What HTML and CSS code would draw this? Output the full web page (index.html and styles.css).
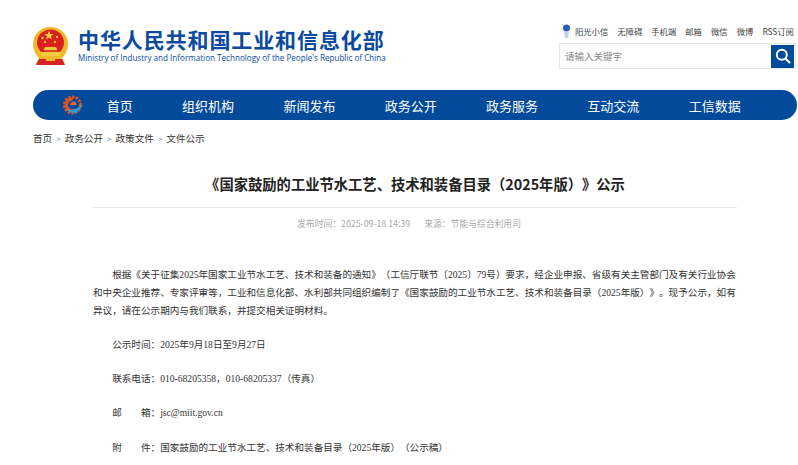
FILE: index.html
```html
<!DOCTYPE html>
<html lang="zh-CN">
<head>
    <meta charset="UTF-8">
    <meta name="viewport" content="width=device-width, initial-scale=1.0">
    <title>《国家鼓励的工业节水工艺、技术和装备目录（2025年版）》公示</title>
    <link rel="stylesheet" href="styles.css">
</head>
<body>
    <header class="header">
        <a href="#" class="brand">
            <svg class="emblem" width="35" height="38" viewBox="0 0 35 38">
                <path d="M17.500 0C8 0 0 7 0 17c0 6 3 11 6 14l-3 6h29l-3-6c3-3 6-8 6-14C35 7 27 0 17.500 0z" fill="#eeb92a"/>
                <ellipse cx="17.500" cy="15.500" rx="13.500" ry="13" fill="#dc1f1d"/>
                <polygon points="16,3.500 17.200,7 20.800,7 17.900,9.200 19,12.600 16,10.500 13,12.600 14.100,9.200 11.200,7 14.800,7" fill="#f7d330"/>
                <circle cx="9.500" cy="11" r="1.200" fill="#f7d330"/>
                <circle cx="24" cy="10" r="1.200" fill="#f7d330"/>
                <circle cx="12" cy="15" r="1.200" fill="#f7d330"/>
                <circle cx="22" cy="15" r="1.200" fill="#f7d330"/>
                <path d="M12 20h11l1.500 3h-14zM8 25h19v4H8z" fill="#f3c93f"/>
                <path d="M11 23h13v2H11z" fill="#d84a26"/>
                <path d="M6 32h23l3 6H3z" fill="#d6231f"/>
                <path d="M13 29h9v5h-9z" fill="#eeb92a"/>
            </svg>
            <span class="brand-text">
                <span class="brand-cn">中华人民共和国工业和信息化部</span>
                <span class="brand-en">Ministry of Industry and Information Technology of the People's Republic of China</span>
            </span>
        </a>
        <div class="tools">
            <ul class="tool-links">
                <li class="sun-item">
                    <svg width="11" height="17" viewBox="0 0 11 17">
                        <path d="M1 2l1.500 1.500M10 2L8.500 3.500M0 7h1.500M11 7H9.500" stroke="#f0c83c" stroke-width="1"/>
                        <circle cx="5.500" cy="6" r="3.500" fill="#2a5cc0"/>
                        <path d="M3 10h5l-1 6H4z" fill="#bcd4f2"/>
                    </svg>
                    <a href="#">阳光小信</a>
                </li>
                <li><a href="#">无障碍</a></li>
                <li><a href="#">手机端</a></li>
                <li><a href="#">邮箱</a></li>
                <li><a href="#">微信</a></li>
                <li><a href="#">微博</a></li>
                <li><a href="#">RSS订阅</a></li>
            </ul>
            <form class="search">
                <input class="search-input" type="text" placeholder="请输入关键字">
                <button class="search-btn" type="button">
                    <svg width="16" height="16" viewBox="0 0 16 16">
                        <circle cx="6.800" cy="6.800" r="5" fill="none" stroke="#fff" stroke-width="2"/>
                        <path d="M10.500 10.500L15 15" stroke="#fff" stroke-width="2.200"/>
                    </svg>
                </button>
            </form>
        </div>
    </header>

    <nav class="nav">
        <svg class="nav-logo" width="20" height="20" viewBox="0 0 20 20">
            <circle cx="9.500" cy="10" r="8" fill="none" stroke="#e2521f" stroke-width="3" stroke-dasharray="2.500 1.200"/>
            <path d="M9.500 4a6 6 0 1 0 4 10.500" fill="none" stroke="#e2521f" stroke-width="3"/>
            <path d="M7 10h6.500c0-2.500-1.500-3.500-3-3.500S8 7.500 7 10z" fill="#f26a2a"/>
            <path d="M4 14c6 2 12 0 15-6-.5 5-3 9-7 10-4 .5-6.500-1-8-4z" fill="#2f9bd6"/>
        </svg>
        <a href="#" class="nav-item">首页</a>
        <a href="#" class="nav-item">组织机构</a>
        <a href="#" class="nav-item">新闻发布</a>
        <a href="#" class="nav-item">政务公开</a>
        <a href="#" class="nav-item">政务服务</a>
        <a href="#" class="nav-item">互动交流</a>
        <a href="#" class="nav-item">工信数据</a>
    </nav>

    <div class="crumbs">
        <a href="#">首页</a><span class="sep">&gt;</span>
        <a href="#">政务公开</a><span class="sep">&gt;</span>
        <a href="#">政策文件</a><span class="sep">&gt;</span>
        <a href="#">文件公示</a>
    </div>

    <main class="article">
        <h1 class="article-title">《国家鼓励的工业节水工艺、技术和装备目录（2025年版）》公示</h1>
        <div class="meta">
            <span>发布时间：2025-09-18 14:39</span>
            <span>来源：节能与综合利用司</span>
        </div>
        <div class="article-body">
            <p>根据《关于征集2025年国家工业节水工艺、技术和装备的通知》（工信厅联节〔2025〕79号）要求，经企业申报、省级有关主管部门及有关行业协会和中央企业推荐、专家评审等，工业和信息化部、水利部共同组织编制了《国家鼓励的工业节水工艺、技术和装备目录（2025年版）》。现予公示，如有异议，请在公示期内与我们联系，并提交相关证明材料。</p>
            <p>公示时间：2025年9月18日至9月27日</p>
            <p>联系电话：010-68205358，010-68205337（传真）</p>
            <p>邮　　箱：jsc@miit.gov.cn</p>
            <p class="last">附　　件：国家鼓励的工业节水工艺、技术和装备目录（2025年版）（公示稿）</p>
        </div>
    </main>
</body>
</html>
```

FILE: styles.css
```css
* {
    box-sizing: border-box;
}
body {
    margin: 0;
    background: #fff;
    color: #333;
    font-family: "Noto Sans CJK SC", "Noto Sans", sans-serif;
    text-spacing-trim: space-all;
    overflow: hidden;
}
a {
    color: inherit;
    text-decoration: none;
}
.header {
    display: flex;
    justify-content: space-between;
    padding: 22px 2px 0 33px;
    height: 90px;
}
.brand {
    display: flex;
    align-items: flex-start;
    gap: 10px;
    padding-top: 5px;
}
.brand-text {
    display: flex;
    flex-direction: column;
    color: #0b4a9e;
    margin-top: -1px;
}
.brand-cn {
    font-size: 21px;
    font-weight: 700;
    line-height: 26px;
    letter-spacing: 0.900px;
    white-space: nowrap;
}
.brand-en {
    font-family: "Open Sans", sans-serif;
    font-size: 8.100px;
    line-height: 12px;
    white-space: nowrap;
}
.tools {
    width: 237px;
}
.tool-links {
    display: flex;
    justify-content: space-between;
    align-items: center;
    list-style: none;
    margin: 0 2px 4px 0;
    padding: 0 0 0 2px;
    height: 17px;
    font-size: 8.300px;
    color: #444;
    white-space: nowrap;
}
.sun-item {
    display: flex;
    align-items: center;
    gap: 3px;
}
.search {
    display: flex;
    align-items: center;
    height: 26px;
    padding-right: 1px;
    border: 1px solid #e8e8e8;
}
.search-input {
    flex: 1;
    min-width: 0;
    border: 0;
    padding: 0 5px;
    font: 9.500px "Noto Sans CJK SC", sans-serif;
    outline: none;
}
.search-input::placeholder {
    color: #888;
}
.search-btn {
    display: flex;
    align-items: center;
    justify-content: center;
    width: 23px;
    height: 23px;
    padding: 0;
    border: 0;
    background: #034a9a;
}
.nav {
    display: flex;
    align-items: center;
    gap: 49.300px;
    height: 30px;
    margin: 0 1px 0 33px;
    padding-left: 30px;
    background: #034a9a;
    border-radius: 15px;
}
.nav-logo {
    margin-right: -25.500px;
}
.nav-item {
    color: #fff;
    font-size: 13px;
    white-space: nowrap;
}
.crumbs {
    display: flex;
    align-items: center;
    gap: 4px;
    margin: 10px 0 0 33px;
    height: 16px;
    font-size: 9.600px;
    color: #333;
}
.sep {
    color: #5a8ac8;
    font-size: 8px;
}
.article {
    width: 644px;
    margin: 0 0 0 93px;
}
.article-title {
    margin: 0;
    padding: 28px 0 13px;
    border-bottom: 1px solid #e8e8e8;
    text-align: center;
    font-size: 14.300px;
    line-height: 20px;
    font-weight: 700;
    color: #222;
    white-space: nowrap;
}
.meta {
    display: flex;
    justify-content: center;
    gap: 14px;
    margin-top: 9px;
    padding-right: 12px;
    font-size: 8.800px;
    line-height: 14px;
    color: #aaa;
}
.article-body {
    margin-top: 35px;
    font-family: "Liberation Serif", "Noto Sans CJK SC", serif;
    font-size: 9.600px;
    line-height: 18px;
    color: #333;
}
.article-body p {
    margin: 0 0 16px;
    text-indent: 2em;
}
.article-body p.last {
    margin-top: 17px;
}
```
